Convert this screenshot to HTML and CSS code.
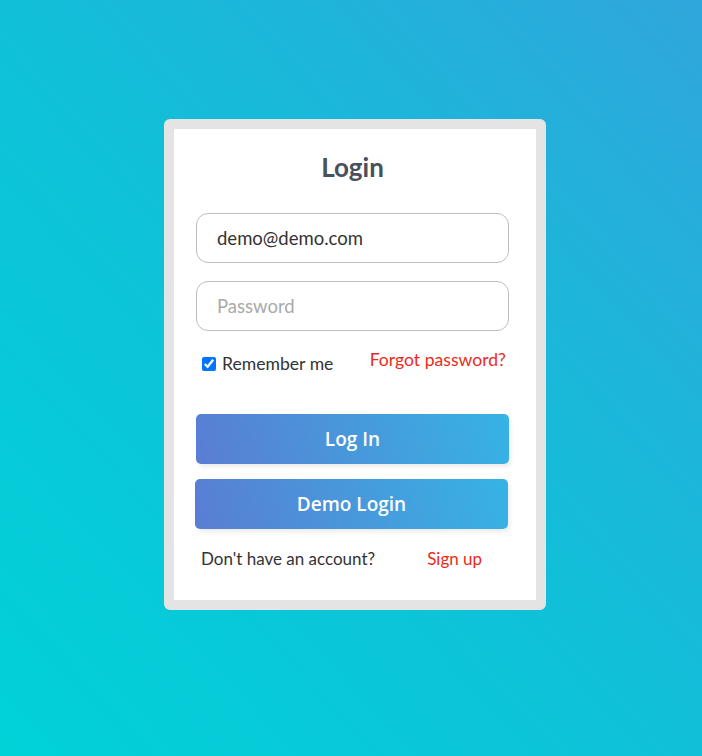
FILE: index.html
```html
<!DOCTYPE html>
<html>
<head>
<meta charset="utf-8">
<link rel="stylesheet" href="styles.css">
</head>
<body>
<div class="page">
  <div class="card">
    <h1 class="title">Login</h1>
    <form class="form">
      <input class="field" type="email" value="demo@demo.com">
      <input class="field" type="password" placeholder="Password">
      <div class="options">
        <label class="remember"><input type="checkbox" class="check" checked> Remember me</label>
        <a class="link forgot" href="#">Forgot password?</a>
      </div>
      <button type="button" class="btn btn-login">Log In</button>
      <button type="button" class="btn btn-demo">Demo Login</button>
      <div class="signup">
        <span class="signup-text">Don't have an account?</span>
        <a class="link" href="#">Sign up</a>
      </div>
    </form>
  </div>
</div>
</body>
</html>
```
FILE: styles.css
```css
html, body {
  margin: 0;
  height: 100%;
}
body {
  background: linear-gradient(to top right, #00d2d8 0%, #0ec2d8 45%, #30a6dc 100%);
  font-family: Lato, "Noto Sans", sans-serif;
}
.page {
  padding: 119px 0 0 8px;
}
.card {
  box-sizing: content-box;
  width: 340px;
  margin: 0 auto;
  padding: 0 0 0 22px;
  background: #fff;
  border: 10px solid #e4e4e4;
  border-radius: 6px;
  height: 471px;
}
.title {
  margin: 0;
  padding-top: 22px;
  width: 313px;
  text-align: center;
  font-size: 26px;
  line-height: 32px;
  font-weight: 700;
  color: #4a4f5c;
}
.form {
  width: 313px;
  display: flex;
  flex-direction: column;
  margin-top: 30px;
}
.field {
  box-sizing: border-box;
  height: 50px;
  width: 313px;
  border: 1px solid #bdbdbd;
  border-radius: 12px;
  padding: 0 20px;
  font-family: Lato, sans-serif;
  font-size: 18.5px;
  color: #333;
  margin: 0 0 18px 0;
  outline: none;
}
.field::placeholder {
  color: #aaa;
}
.options {
  display: flex;
  justify-content: space-between;
  align-items: flex-start;
  height: 65px;
}
.remember {
  display: flex;
  align-items: center;
  font-size: 17.6px;
  color: #333;
  margin-top: 4px;
  margin-left: 6px;
}
.check {
  width: 14px;
  height: 14px;
  margin: 0 6px 0 0;
}
.link {
  color: #ee2a1b;
  text-decoration: none;
  font-size: 17px;
}
.forgot {
  font-size: 17.6px;
  margin-right: 3px;
}
.btn {
  height: 50px;
  width: 313px;
  border: none;
  border-radius: 5px;
  background: linear-gradient(72deg, #5a7dd3, #36b3e4);
  color: #fff;
  font-family: "Open Sans", sans-serif;
  font-weight: 600;
  font-size: 19px;
  box-shadow: 2px 3px 4px rgba(0,0,0,0.08);
}
.btn-demo {
  margin-top: 15px;
  margin-left: -1px;
}
.signup {
  display: flex;
  gap: 52px;
  margin-top: 19px;
  margin-left: 5px;
  font-size: 17px;
  color: #333;
}
```
